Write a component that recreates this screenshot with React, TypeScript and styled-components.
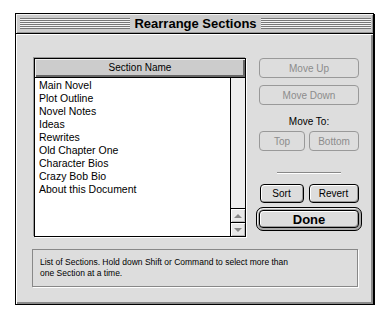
import React from 'react';
import styled, { createGlobalStyle } from 'styled-components';

const GlobalStyle = createGlobalStyle`
  html, body {
    margin: 0;
    padding: 0;
    background: #ffffff;
  }
  body {
    font-family: 'Liberation Sans', Arial, sans-serif;
    color: #000;
  }
`;

const Page = styled.div`
  padding: 13px 0 0 15px;
`;

const Window = styled.div`
  width: 359px;
  height: 292px;
  box-sizing: border-box;
  border: 1px solid #000;
  box-shadow: 1px 1px 0 #000;
  background: #dddddd;
  display: flex;
  flex-direction: column;
`;

const TitleBar = styled.div`
  height: 20px;
  box-sizing: border-box;
  border-bottom: 1px solid #000;
  background: #cccccc;
  box-shadow: inset 1px 1px 0 #f4f4f4, inset -1px -1px 0 #999;
  display: flex;
  align-items: center;
  gap: 4px;
  padding: 0 2px 0 4px;
`;

const Stripes = styled.div`
  flex: 1;
  height: 11px;
  background: repeating-linear-gradient(
    to bottom,
    #777 0,
    #777 1px,
    #f4f4f4 1px,
    #f4f4f4 2px
  );
`;

const Title = styled.div`
  font-size: 13px;
  font-weight: bold;
  line-height: 16px;
  white-space: nowrap;
`;

const Content = styled.div`
  flex: 1;
  box-shadow: inset 1px 1px 0 #fff, inset -2px -2px 0 #8a8a8a;
  padding: 24px 0 0 18px;
  display: flex;
  flex-direction: column;
`;

const Main = styled.div`
  display: flex;
  align-items: flex-start;
`;

const List = styled.div`
  width: 212px;
  height: 179px;
  box-sizing: border-box;
  border: 1px solid #000;
  box-shadow: -1px -1px 0 #999, 1px 1px 0 #fff;
  background: #fff;
  display: flex;
  flex-direction: column;
`;

const Header = styled.div`
  height: 19px;
  box-sizing: border-box;
  background: #cccccc;
  border-bottom: 1px solid #000;
  box-shadow: inset 1px 1px 0 #eee, inset -2px -2px 0 #666;
  font-size: 10px;
  line-height: 18px;
  text-align: center;
`;

const ListBody = styled.div`
  flex: 1;
  display: flex;
`;

const Rows = styled.div`
  flex: 1;
  padding: 1px 0 0 4px;
`;

const Row = styled.div`
  font-size: 10.5px;
  line-height: 13px;
  white-space: nowrap;
`;

const ScrollBar = styled.div`
  width: 14px;
  border-left: 1px solid #000;
  background: #eeeeee;
  display: flex;
  flex-direction: column;
  justify-content: flex-end;
`;

const Arrow = styled.div<{ $down?: boolean }>`
  height: 13px;
  border-top: 1px solid #000;
  background: #e8e8e8;
  box-shadow: inset 1px 1px 0 #fff, inset -1px -1px 0 #bbb;
  display: flex;
  align-items: center;
  justify-content: center;

  &::before {
    content: '';
    width: 0;
    height: 0;
    border-left: 4px solid transparent;
    border-right: 4px solid transparent;
    ${(p) =>
      p.$down
        ? 'border-top: 4px solid #888;'
        : 'border-bottom: 4px solid #888;'}
  }
`;

const Side = styled.div`
  margin-left: 10px;
  width: 106px;
  display: flex;
  flex-direction: column;
  align-items: center;
`;

const Button = styled.button<{ $w: number; $h?: number }>`
  width: ${(p) => p.$w}px;
  height: ${(p) => p.$h ?? 20}px;
  box-sizing: border-box;
  padding: 0;
  border: 1px solid #000;
  border-radius: 4px;
  background: #dddddd;
  box-shadow: inset 1px 1px 0 #fff, inset -1px -1px 0 #999;
  font-family: 'Liberation Sans', Arial, sans-serif;
  font-size: 10px;
  color: #000;

  &:disabled {
    border-color: #999;
    color: #8c8c8c;
    box-shadow: none;
  }
`;

const Pair = styled.div<{ $gap: number }>`
  display: flex;
  gap: ${(p) => p.$gap}px;
`;

const Label = styled.div`
  margin-top: 11px;
  font-size: 10px;
  line-height: 12px;
`;

const Separator = styled.div`
  width: 64px;
  height: 1px;
  margin: 21px 0 11px;
  background: #888;
  box-shadow: 0 1px 0 #fff;
`;

const DefaultRing = styled.div`
  margin-top: 4px;
  width: 106px;
  height: 24px;
  box-sizing: border-box;
  border: 1px solid #000;
  border-radius: 7px;
  padding: 2px;
  background: #aaaaaa;
  box-shadow: inset 1px 1px 0 #eee;
  display: flex;
`;

const DoneButton = styled(Button)`
  flex: 1;
  height: auto;
  font-size: 13px;
  font-weight: bold;
`;

const Help = styled.div`
  margin: 12px 0 0 -2px;
  width: 326px;
  height: 38px;
  box-sizing: border-box;
  border: 1px solid #888;
  box-shadow: 1px 1px 0 #fff;
  padding: 7px 0 0 7px;
`;

const HelpText = styled.p`
  margin: 0;
  width: 254px;
  font-size: 8.5px;
  line-height: 11px;
`;

const sections = [
  'Main Novel',
  'Plot Outline',
  'Novel Notes',
  'Ideas',
  'Rewrites',
  'Old Chapter One',
  'Character Bios',
  'Crazy Bob Bio',
  'About this Document',
];

const App: React.FC = () => {
  return (
    <Page>
      <GlobalStyle />
      <Window>
        <TitleBar>
          <Stripes />
          <Title>Rearrange Sections</Title>
          <Stripes />
        </TitleBar>
        <Content>
          <Main>
            <List>
              <Header>Section Name</Header>
              <ListBody>
                <Rows>
                  {sections.map((s) => (
                    <Row key={s}>{s}</Row>
                  ))}
                </Rows>
                <ScrollBar>
                  <Arrow />
                  <Arrow $down />
                </ScrollBar>
              </ListBody>
            </List>
            <Side>
              <Button $w={100} disabled>Move Up</Button>
              <Button $w={100} disabled style={{ marginTop: 7 }}>Move Down</Button>
              <Label>Move To:</Label>
              <Pair $gap={4} style={{ marginTop: 3 }}>
                <Button $w={46} disabled>Top</Button>
                <Button $w={50} disabled>Bottom</Button>
              </Pair>
              <Separator />
              <Pair $gap={5}>
                <Button $w={44} $h={19}>Sort</Button>
                <Button $w={50} $h={19}>Revert</Button>
              </Pair>
              <DefaultRing>
                <DoneButton $w={0}>Done</DoneButton>
              </DefaultRing>
            </Side>
          </Main>
          <Help>
            <HelpText>
              List of Sections. Hold down Shift or Command to select more than
              one Section at a time.
            </HelpText>
          </Help>
        </Content>
      </Window>
    </Page>
  );
};

export default App;
